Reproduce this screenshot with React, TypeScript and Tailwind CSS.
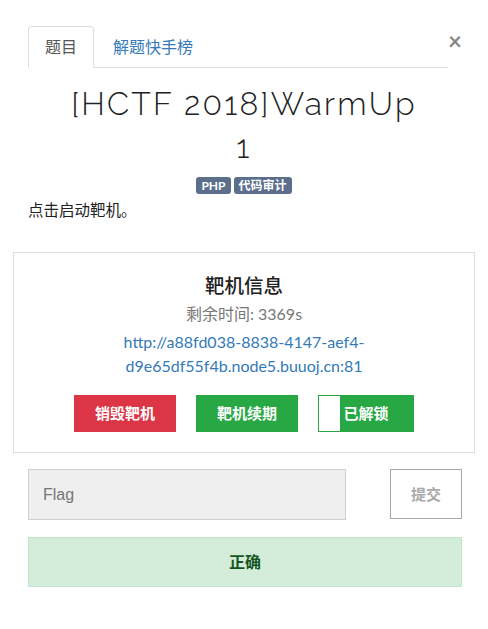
import React from "react";

const App: React.FC = () => {
  const url = "http://a88fd038-8838-4147-aef4-d9e65df55f4b.node5.buuoj.cn:81";

  return (
    <div className="min-h-screen bg-white pt-[26px] text-[#333] font-['Lato','Noto_Sans_CJK_SC',sans-serif]">
      {/* Tabs */}
      <div className="flex items-start pl-[28px] pr-[26px]">
        <ul className="flex flex-1 border-b border-[#ddd]">
          <li className="-mb-px">
            <a className="flex h-[42px] items-center rounded-t-[4px] border border-[#ddd] border-b-white px-4 text-[16px] text-[#555]">
              题目
            </a>
          </li>
          <li className="-mb-px ml-[2px]">
            <a className="flex h-[42px] items-center border border-transparent px-4 text-[16px] text-[#337ab7]">
              解题快手榜
            </a>
          </li>
        </ul>
        <button className="mt-[3px] w-[14px] text-center text-[24px] font-bold leading-none text-[#888]">×</button>
      </div>

      {/* Title */}
      <h1 className="mx-auto mt-[14px] max-w-[360px] text-center text-[32px] font-light leading-[43px] tracking-[0.07em] text-[#222] font-['Raleway','Lato',sans-serif]">
        [HCTF 2018]WarmUp 1
      </h1>
      <div className="mt-[9px] flex justify-center gap-[3px]">
        <span className="flex h-[17px] items-center rounded-[3px] bg-[#5b6f8d] px-[5px] text-[12px] font-bold text-white">PHP</span>
        <span className="flex h-[17px] items-center rounded-[3px] bg-[#5b6f8d] px-[5px] text-[12px] font-bold text-white">代码审计</span>
      </div>
      <p className="mt-[5px] px-[28px] text-[15.5px] leading-[22px] text-[#222]">点击启动靶机。</p>

      {/* Instance card */}
      <div className="mx-[13px] mt-[31px] border border-[#ddd] px-4 pt-[20px] pb-[20px] text-center">
        <h3 className="text-[19.5px] font-medium leading-[26px] text-[#222]">靶机信息</h3>
        <p className="mt-[2px] text-[16px] leading-[26px] text-[#777]">剩余时间: 3369s</p>
        <a className="mx-auto mt-[3px] block max-w-[320px] text-[16px] leading-[24px] text-[#337ab7]">{url}</a>
        <div className="mt-[17px] flex justify-center gap-[20px]">
          <button className="h-[37px] w-[102px] bg-[#dc3545] text-[15px] font-bold text-white">销毁靶机</button>
          <button className="h-[37px] w-[102px] bg-[#28a745] text-[15px] font-bold text-white">靶机续期</button>
          <button className="relative h-[37px] w-[96px] border border-[#28a745] bg-[#28a745] text-[15px] font-bold text-white">
            <span className="absolute left-0 top-0 h-full w-[21px] bg-white" />
            已解锁
          </button>
        </div>
      </div>

      {/* Flag form */}
      <div className="mt-[16px] flex pl-[28px] pr-[26px]">
        <input
          placeholder="Flag"
          className="h-[51px] w-[318px] border border-[#ccd0d6] bg-[#efefef] px-[14px] text-[16px] text-[#555] placeholder:text-[#777] font-['Liberation_Sans',sans-serif] outline-none"
        />
        <button className="ml-auto h-[50px] w-[72px] border border-[#a8a8a8] bg-white text-[15px] font-bold text-[#aaa]">提交</button>
      </div>
      <div className="ml-[28px] mr-[26px] mt-[17px] flex h-[50px] items-center justify-center border border-[#c3e6cb] bg-[#d4edda] text-[16px] font-bold text-[#155724]">
        正确
      </div>
    </div>
  );
};

export default App;
